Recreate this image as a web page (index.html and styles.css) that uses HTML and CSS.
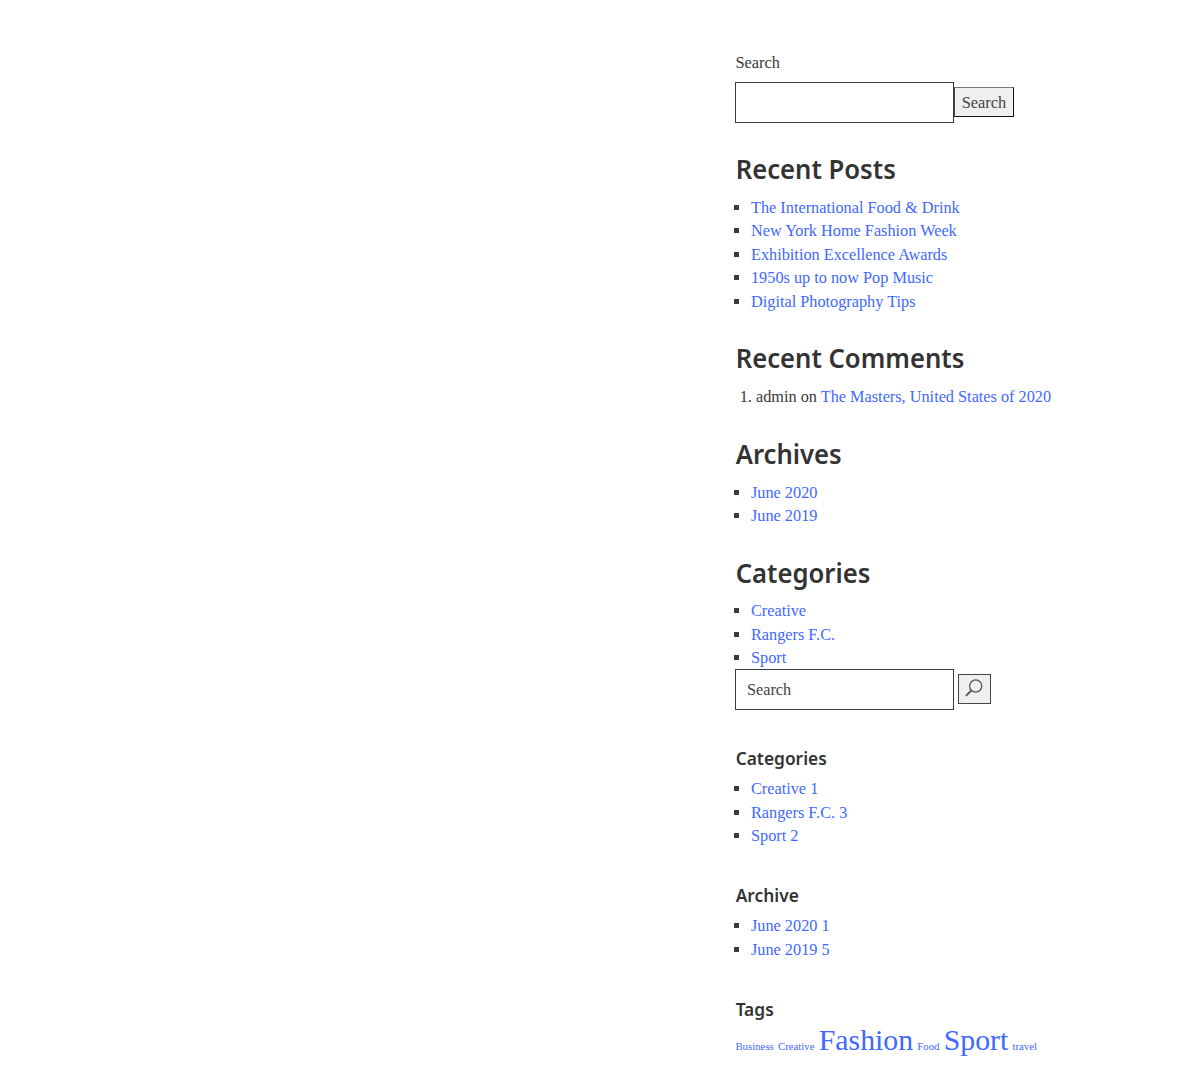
FILE: index.html
```html
<!DOCTYPE html>
<html lang="en">
<head>
<meta charset="utf-8">
<title>Blog sidebar</title>
<link rel="stylesheet" href="styles.css">
</head>
<body>
<aside class="sidebar">
  <form class="search">
    <label class="search-label" for="s1">Search</label>
    <div class="search-row">
      <input class="search-input" id="s1" type="text">
      <button class="search-button" type="button">Search</button>
    </div>
  </form>
  <section>
    <h2 class="title">Recent Posts</h2>
    <ul class="list">
      <li><a href="#">The International Food &amp; Drink</a></li>
      <li><a href="#">New York Home Fashion Week</a></li>
      <li><a href="#">Exhibition Excellence Awards</a></li>
      <li><a href="#">1950s up to now Pop Music</a></li>
      <li><a href="#">Digital Photography Tips</a></li>
    </ul>
  </section>
  <section>
    <h2 class="title">Recent Comments</h2>
    <ol class="list list-numbered">
      <li>admin on <a href="#">The Masters, United States of 2020</a></li>
    </ol>
  </section>
  <section>
    <h2 class="title">Archives</h2>
    <ul class="list">
      <li><a href="#">June 2020</a></li>
      <li><a href="#">June 2019</a></li>
    </ul>
  </section>
  <section>
    <h2 class="title">Categories</h2>
    <ul class="list">
      <li><a href="#">Creative</a></li>
      <li><a href="#">Rangers F.C.</a></li>
      <li><a href="#">Sport</a></li>
    </ul>
  </section>
  <form class="search-row search-row-spaced">
    <input class="search-input" type="text" placeholder="Search" aria-label="Search">
    <button class="search-button icon-button" type="button" aria-label="Submit">
      <svg class="icon" viewBox="0 0 18 18"><circle cx="10.7" cy="7" r="6.1"/><path d="M6.4 11.3 1 16.8"/></svg>
    </button>
  </form>
  <section>
    <h3 class="subtitle">Categories</h3>
    <ul class="list">
      <li><a href="#">Creative 1</a></li>
      <li><a href="#">Rangers F.C. 3</a></li>
      <li><a href="#">Sport 2</a></li>
    </ul>
  </section>
  <section>
    <h3 class="subtitle">Archive</h3>
    <ul class="list">
      <li><a href="#">June 2020 1</a></li>
      <li><a href="#">June 2019 5</a></li>
    </ul>
  </section>
  <section>
    <h3 class="subtitle">Tags</h3>
    <div class="tags"><a href="#">Business</a><a href="#">Creative</a><a class="tag-large" href="#">Fashion</a><a href="#">Food</a><a class="tag-large" href="#">Sport</a><a href="#">travel</a></div>
  </section>
</aside>
</body>
</html>
```
FILE: styles.css
```css
* { box-sizing: border-box; }
body {
  margin: 0;
  height: 1066px;
  overflow: hidden;
  background: #fff;
  color: #3a3a3a;
  font: 16.28px/23.4px "Liberation Serif", "Times New Roman", serif;
}
.sidebar { width: 340px; margin-left: 735.4px; padding-top: 51.4px; }
a { color: #4169ff; text-decoration: none; }
.search { padding-bottom: .6px; }
.search-label { display: block; margin-bottom: 7.4px; font-size: 16.4px; }
.search-row { display: flex; align-items: center; }
.search-row-spaced { gap: 4px; margin-top: -.6px; }
.search-input {
  width: 218.6px;
  height: 41px;
  padding: 0 10.5px;
  border: 1px solid #3a3a3a;
  border-radius: 0;
  background: #fff;
  color: #333;
  font: inherit;
}
.search-input::placeholder { color: #444; opacity: 1; }
.search-button {
  width: 60px;
  height: 30px;
  margin-bottom: 1.4px;
  padding: 1px 0 0;
  border: 1px solid #111;
  border-top-color: #777;
  border-left-color: #444;
  background: #efefef;
  color: #444;
  font: inherit;
  font-size: 16.4px;
}
.icon-button {
  display: flex;
  justify-content: center;
  width: 33px;
  padding-top: 4px;
  border-color: #444;
}
.icon { width: 18px; height: 18px; fill: none; stroke: #555; stroke-width: 1.3; }
.icon path { stroke-width: 1.9; }
.title, .subtitle {
  padding-left: .7px;
  color: #333;
  font-family: "Noto Sans", sans-serif;
  font-weight: 600;
  white-space: nowrap;
  transform: scaleX(.933);
  transform-origin: left;
}
.title { margin: 25.3px 0 6.8px; font-size: 27.5px; line-height: 40px; }
.subtitle { margin: 33.8px 0 5.3px; font-size: 18.6px; line-height: 28px; }
.list { margin: 0; padding-left: 15.6px; list-style: square; }
.list-numbered { padding-left: 20.6px; list-style: decimal; }
.tags { display: flex; align-items: baseline; gap: 4.2px; font-size: 10.8px; line-height: 34px; margin-top: -5.2px; }
.tag-large { font-size: 29.8px; }
```
